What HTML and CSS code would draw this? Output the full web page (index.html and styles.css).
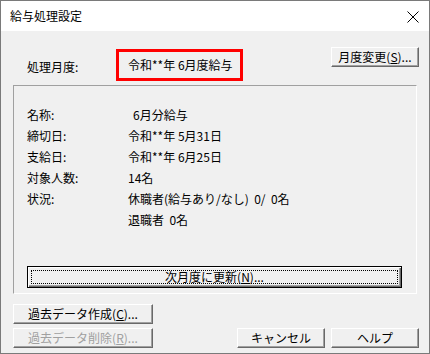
FILE: index.html
```html
<!DOCTYPE html>
<html>
  <head>
    <title>給与処理設定</title>
    <link rel="stylesheet" href="styles.css">
  </head>
  <body>
    <div class="window">
      <div class="titlebar">
        <span class="title">給与処理設定</span>
        <svg class="close" width="12" height="12" viewBox="0 0 12 12">
          <path d="M0.5 0.5 L11.5 11.5 M11.5 0.5 L0.5 11.5" stroke="#000" stroke-width="1" fill="none"/>
        </svg>
      </div>

      <div class="content">
        <div class="month-row">
          <span class="month-label">処理月度:</span>
          <div class="month-box">令和**年 6月度給与</div>
          <button class="btn btn-change">月度変更(<u>S</u>)...</button>
        </div>

        <div class="group">
          <div class="info">
            <span>名称:</span><span class="indent">6月分給与</span>
            <span>締切日:</span><span>令和**年 5月31日</span>
            <span>支給日:</span><span>令和**年 6月25日</span>
            <span>対象人数:</span><span>14名</span>
            <span>状況:</span><span>休職者(給与あり/なし)  0/  0名</span>
            <span></span><span>退職者  0名</span>
          </div>
          <button class="btn btn-default"><span class="focus">次月度に更新(<u>N</u>)...</span></button>
        </div>

        <div class="bottom-row">
          <div class="left-buttons">
            <button class="btn btn-wide">過去データ作成(<u>C</u>)...</button>
            <button class="btn btn-wide disabled">過去データ削除(<u>R</u>)...</button>
          </div>
          <div class="right-buttons">
            <button class="btn btn-small">キャンセル</button>
            <button class="btn btn-small">ヘルプ</button>
          </div>
        </div>
      </div>
    </div>
  </body>
</html>
```

FILE: styles.css
```css
body {
  margin: 0;
  font-family: "Noto Sans CJK JP", "Liberation Sans", sans-serif;
  font-size: 12px;
  color: #000;
}
.window {
  width: 430px;
  height: 354px;
  box-sizing: border-box;
  border: 1px solid #7a7a7a;
  display: flex;
  flex-direction: column;
  background: #f0f0f0;
}
.titlebar {
  height: 30px;
  background: #fff;
  display: flex;
  align-items: center;
  justify-content: space-between;
  padding: 0 10px 0 9px;
  flex-shrink: 0;
}
.title {
  font-size: 12px;
  margin-top: -1px;
}
.close {
  margin-top: 1px;
}
.content {
  flex: 1;
  padding: 0 12px;
  display: flex;
  flex-direction: column;
}
.month-row {
  display: flex;
  align-items: flex-start;
  margin-top: 16px;
  height: 34px;
}
.month-label {
  width: 103px;
  padding-left: 14px;
  box-sizing: border-box;
  line-height: 20px;
  margin-top: 10px;
}
.month-box {
  width: 127px;
  height: 32px;
  box-sizing: border-box;
  border: 3px solid #ff0000;
  margin-top: 2px;
  padding-left: 9px;
  line-height: 26px;
  white-space: pre;
}
.btn {
  font-family: inherit;
  font-size: 12px;
  color: #000;
  background: #f0f0f0;
  border: 1px solid;
  border-color: #fff #696969 #696969 #fff;
  box-shadow: inset -1px -1px 0 #a0a0a0;
  height: 20px;
  padding: 0;
  line-height: 16px;
  text-align: center;
}
.btn u {
  text-underline-offset: 1px;
}
.btn-change {
  width: 88px;
  margin-left: auto;
  margin-right: -2px;
}
.group {
  margin-top: 4px;
  height: 209px;
  box-sizing: border-box;
  border: 1px solid;
  border-color: #a0a0a0 #fff #fff #a0a0a0;
  padding: 18px 14px 5px 13px;
  display: flex;
  flex-direction: column;
}
.info {
  display: grid;
  grid-template-columns: 101px 1fr;
  line-height: 21px;
  white-space: pre;
}
.indent {
  padding-left: 5px;
}
.btn-default {
  margin-top: auto;
  height: 22px;
  border: 1px solid #000;
  box-shadow: inset 1px 1px 0 #fff, inset -1px -1px 0 #696969, inset -2px -2px 0 #a0a0a0;
  padding: 3px;
  display: flex;
}
.focus {
  flex: 1;
  border: 1px dotted #000;
  line-height: 12px;
}
.bottom-row {
  display: flex;
  align-items: flex-end;
  margin-top: 10px;
}
.left-buttons {
  display: flex;
  flex-direction: column;
  gap: 4px;
}
.btn-wide {
  width: 140px;
}
.disabled {
  color: #a0a0a0;
}
.right-buttons {
  display: flex;
  gap: 6px;
  margin-left: auto;
  margin-right: -2px;
}
.btn-small {
  width: 88px;
}
```
